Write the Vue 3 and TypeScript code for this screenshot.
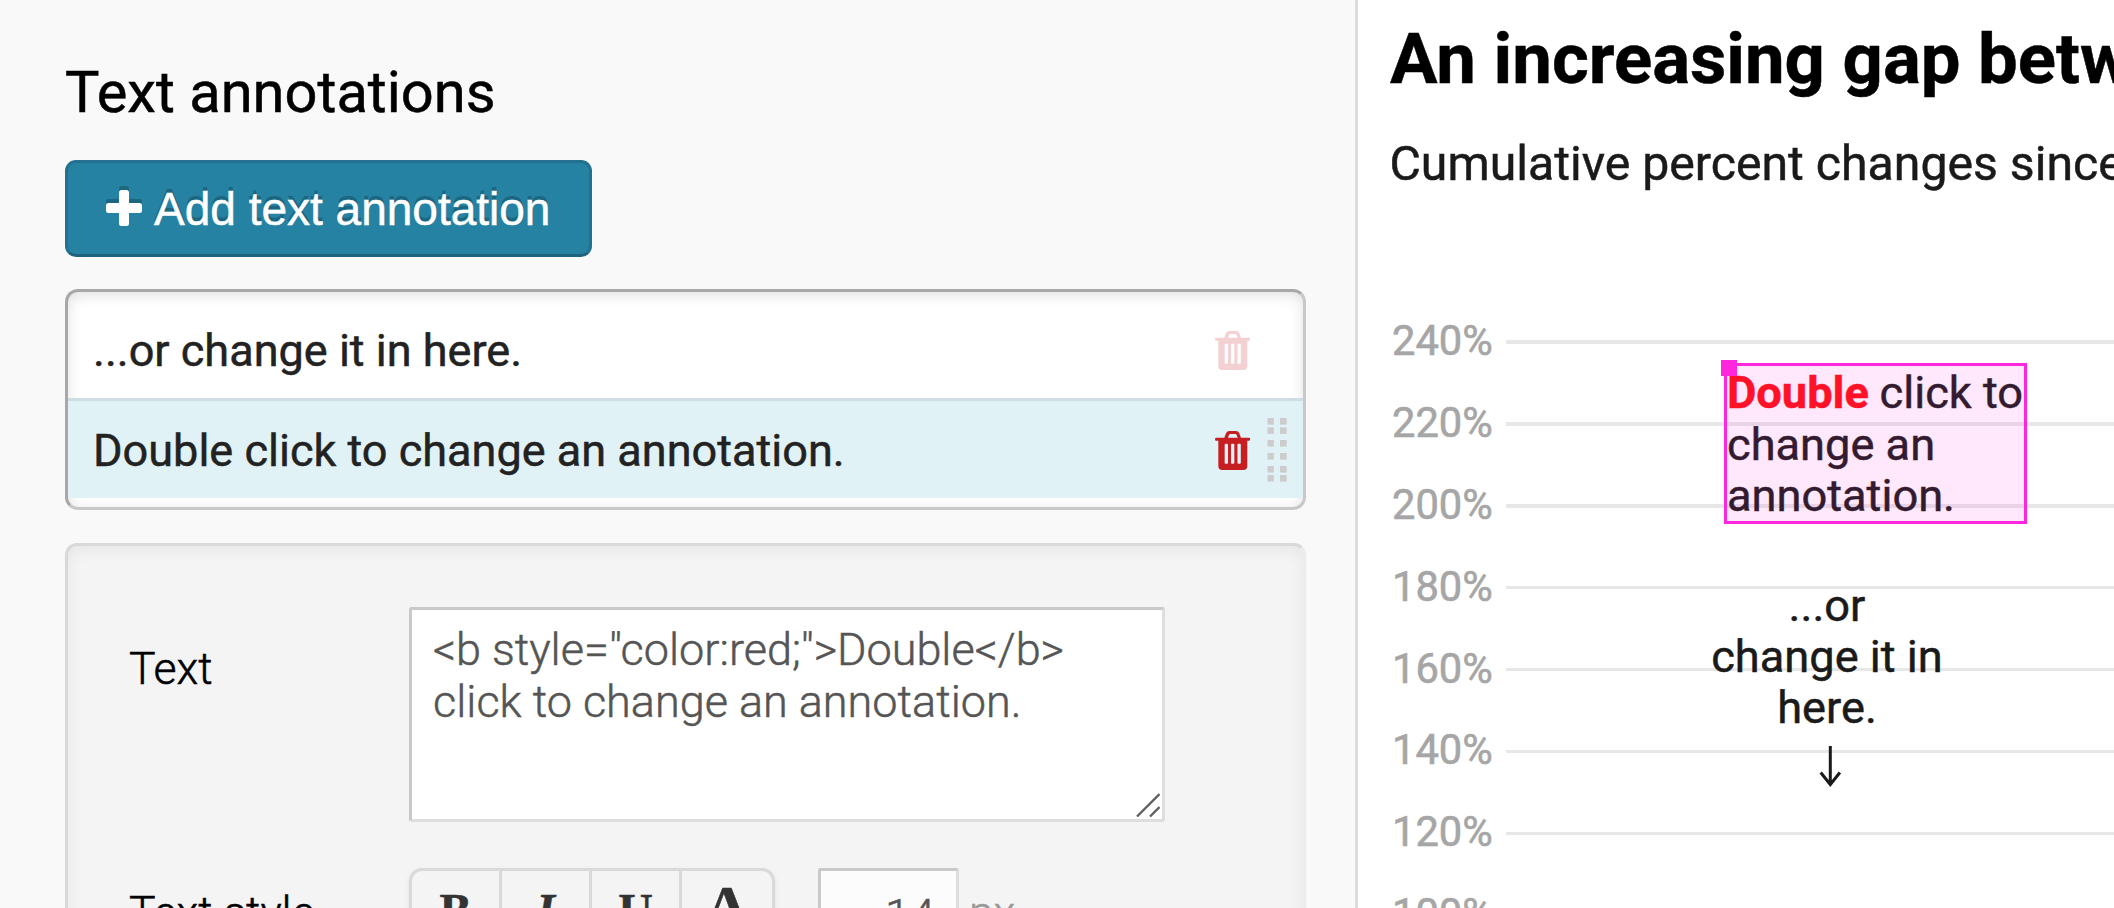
<script setup lang="ts">
import { ref } from 'vue'

interface Annotation {
  id: number
  label: string
}

const annotations: Annotation[] = [
  { id: 1, label: '...or change it in here.' },
  { id: 2, label: 'Double click to change an annotation.' },
]
const selected = ref(2)
const text = ref('<b style="color:red;">Double</b> click to change an annotation.')
const size = ref('14')

const ticks = [
  { label: '240%', y: 340, h: 4, base: 355 },
  { label: '220%', y: 422, h: 4, base: 437 },
  { label: '200%', y: 504, h: 4, base: 519 },
  { label: '180%', y: 586, h: 3, base: 601 },
  { label: '160%', y: 668, h: 3, base: 683 },
  { label: '140%', y: 750, h: 3, base: 764 },
  { label: '120%', y: 832, h: 3, base: 846 },
  { label: '100%', y: 914, h: 3, base: 928 },
]
const plus =
  'M15.5 0h5a2.5 2.5 0 0 1 2.5 2.5V13h10.5a2.5 2.5 0 0 1 2.5 2.5v5a2.5 2.5 0 0 1-2.5 2.5H23v10.5a2.5 2.5 0 0 1-2.5 2.5h-5a2.5 2.5 0 0 1-2.5-2.5V23H2.5A2.5 2.5 0 0 1 0 20.5v-5A2.5 2.5 0 0 1 2.5 13H13V2.5A2.5 2.5 0 0 1 15.5 0z'
</script>

<template>
  <div class="app">
    <section class="editor">
      <h2 class="heading">Text annotations</h2>
      <button class="add" type="button">
        <svg class="plus" viewBox="0 0 36 40" width="36" height="40">
          <path class="plus-shade" :d="plus" />
          <path class="plus-front" transform="translate(0 4)" :d="plus" />
        </svg>
        <span>Add text annotation</span>
      </button>

      <ul class="list">
        <li
          v-for="a in annotations"
          :key="a.id"
          class="row"
          :class="{ active: a.id === selected }"
          @click="selected = a.id"
        >
          <span class="row-label">{{ a.label }}</span>
          <svg class="trash" viewBox="344 181 106 117" width="35.3" height="39">
            <path
              fill-rule="evenodd"
              d="M372 201l5-13q3-7 10-7h20q7 0 10 7l5 13h24q4 0 4 4.500t-4 4.500h-5v76q0 12-12 12h-63q-12 0-12-12v-76h-6q-4 0-4-4.500t4-4.500zM383 201h29l-3-8q-1-3-4-3h-15q-3 0-4 3zM373 222v54q0 3 3 3h4q3 0 3-3v-54q0-3-3-3h-4q-3 0-3 3zM392 222v54q0 3 3 3h4q3 0 3-3v-54q0-3-3-3h-4q-3 0-3 3zM411.500 222v54q0 3 3 3h4q3 0 3-3v-54q0-3-3-3h-4q-3 0-3 3z"
            />
          </svg>
          <svg class="grip" viewBox="0 0 20 64" width="20" height="64">
            <template v-for="y in [0, 9.3, 22, 35, 48, 57]" :key="y">
              <rect x="0.5" :y="y" width="6.3" height="6.6" />
              <rect x="13" :y="y" width="6.7" height="6.6" />
            </template>
          </svg>
        </li>
      </ul>

      <div class="panel">
        <div class="field">
          <label class="label text-label">Text</label>
          <div class="area-wrap">
            <textarea v-model="text" class="area" spellcheck="false"></textarea>
            <svg class="resize" viewBox="0 0 24 24" width="24" height="24">
              <path d="M1 23.500L23.500 1M14 23.500L23.500 14" />
            </svg>
          </div>
        </div>
        <div class="field style-field">
          <label class="label style-label">Text style</label>
          <div class="group">
            <button type="button" class="tool">B</button>
            <button type="button" class="tool italic">I</button>
            <button type="button" class="tool">U</button>
            <button type="button" class="tool color">A</button>
          </div>
          <input v-model="size" class="size" type="text" />
          <span class="unit">px</span>
        </div>
      </div>
    </section>

    <section class="preview">
      <h1 class="title">An increasing gap between</h1>
      <p class="subtitle">Cumulative percent changes since</p>
      <svg class="chart" viewBox="1358 200 756 708" width="756" height="708">
        <g v-for="t in ticks" :key="t.label">
          <text class="tick" x="1392" :y="t.base">{{ t.label }}</text>
          <rect class="grid" x="1506" :y="t.y" width="620" :height="t.h" />
        </g>

        <text class="note" y="408"><tspan class="strong" x="1727">Double</tspan><tspan x="1879.5">click to</tspan></text>
        <text class="note" x="1727" y="460">change an</text>
        <text class="note" x="1727" y="511">annotation.</text>
        <rect class="box-fill" x="1724" y="363" width="303" height="161" />
        <rect class="box-line" x="1725.5" y="364.5" width="300" height="158" />
        <rect class="handle" x="1721" y="360" width="16" height="16" />

        <text class="note mid" x="1827" y="621">...or</text>
        <text class="note mid" x="1827" y="672">change it in</text>
        <text class="note mid" x="1827" y="723">here.</text>
        <path class="arrow" d="M1830.300 746v38M1820.700 772.500l9.600 12 9.600-12" />
      </svg>
    </section>
  </div>
</template>

<style scoped>
.app {
  display: flex;
  width: 2114px;
  height: 908px;
  overflow: hidden;
  background: #fff;
  font-family: Roboto, sans-serif;
  color: #000;
  -webkit-text-stroke: 0.5px currentColor;
}
.editor {
  box-sizing: border-box;
  flex: none;
  width: 1358px;
  height: 908px;
  padding: 57px 0 0 65px;
  overflow: hidden;
  background: #f9f9f9;
  border-right: 3px solid #dcdcdc;
}
.heading {
  margin: 0 0 33px;
  font-size: 57.8px;
  line-height: 70px;
  font-weight: 400;
}
.add {
  display: flex;
  align-items: center;
  box-sizing: border-box;
  width: 527px;
  height: 97px;
  margin: 0;
  padding: 0 0 0 38px;
  gap: 12px;
  border: 3px solid #23718e;
  border-bottom-color: #1d637d;
  border-radius: 11px;
  background: #2682a2;
  color: #fff;
  font-family: "Liberation Sans", sans-serif;
  font-size: 46px;
  line-height: 60px;
  white-space: nowrap;
  text-shadow: 0 -4px 0 #1c6680;
  -webkit-text-stroke: 0.5px #fff;
}
.plus {
  flex: none;
  margin-top: -5px;
}
.plus-shade {
  fill: #1c6680;
}
.plus-front {
  fill: #fff;
}
.list {
  box-sizing: border-box;
  width: 1241px;
  height: 221px;
  margin: 32px 0 33px;
  padding: 6px 0 9px;
  list-style: none;
  border: 3px solid;
  border-color: #a8a8a8 #c8c8c8 #c8c8c8 #a8a8a8;
  border-radius: 13px;
  background: #fff;
  box-shadow: inset 0 3px 14px rgba(0, 0, 0, 0.12);
}
.row {
  display: flex;
  align-items: center;
  box-sizing: border-box;
  height: 100px;
  padding: 2px 16px 0 25px;
  border-top: 3px solid transparent;
}
.row.active {
  background: #e1f2f7;
  border-top-color: #cddde3;
}
.row-label {
  flex: 1;
  font-size: 45.05px;
  line-height: 60px;
  color: #222;
  white-space: nowrap;
}
.trash {
  flex: none;
  margin-right: 17px;
  margin-top: -1px;
  fill: #c71e22;
  opacity: 0.2;
}
.active .trash {
  opacity: 1;
}
.grip {
  flex: none;
  margin-top: -2px;
  fill: #ccc;
  visibility: hidden;
}
.active .grip {
  visibility: visible;
}
.panel {
  box-sizing: border-box;
  width: 1241px;
  height: 500px;
  padding: 61px 0 0 61px;
  border: 3px solid #d9d9d9;
  border-right-color: #ececec;
  border-radius: 12px;
  background: #f4f4f4;
  box-shadow: inset 0 4px 16px rgba(0, 0, 0, 0.06);
}
.field {
  display: flex;
  align-items: flex-start;
}
.style-field {
  margin-top: 46px;
}
.label {
  flex: none;
  width: 280px;
  font-size: 44.6px;
  line-height: 60px;
  font-weight: 300;
}
.text-label {
  margin-top: 32px;
}
.style-label {
  margin-top: 15px;
}
.area-wrap {
  position: relative;
  width: 756px;
  height: 215px;
}
.area {
  display: block;
  box-sizing: border-box;
  width: 756px;
  height: 215px;
  margin: 0;
  padding: 14px 21px;
  overflow: hidden;
  resize: none;
  border: 3px solid;
  border-color: #c9c9c9 #dedede #dedede #c9c9c9;
  border-radius: 3px;
  background: #fff;
  font: 300 45px/52px Roboto, sans-serif;
  color: #555;
  outline: none;
  -webkit-text-stroke: 0.5px #555;
}
.resize {
  position: absolute;
  right: 5px;
  bottom: 5px;
  fill: none;
  stroke: #606060;
  stroke-width: 2.3;
}
.group {
  display: flex;
  box-sizing: border-box;
  flex: none;
  width: 366px;
  height: 90px;
  border: 3px solid #d9d9d9;
  border-radius: 13px;
  box-shadow: 0 3px 6px rgba(0, 0, 0, 0.07);
}
.tool {
  box-sizing: border-box;
  width: 90px;
  height: 84px;
  margin: 0;
  padding: 0 0 6px;
  border: 0;
  border-right: 3px solid #d9d9d9;
  background: none;
  font: 700 48px/75px "Liberation Serif", serif;
  color: #333;
  text-align: center;
}
.tool.italic {
  font-style: italic;
}
.tool.color {
  padding-bottom: 13px;
  border-right: 0;
  font-size: 62px;
  line-height: 70px;
}
.size {
  box-sizing: border-box;
  width: 141px;
  height: 90px;
  margin: 0 0 0 43px;
  padding: 4px 21px 0 0;
  border: 3px solid;
  border-color: #c9c9c9 #dedede #dedede #c9c9c9;
  border-radius: 3px;
  background: #fcfcfc;
  font: 300 45px/60px Roboto, sans-serif;
  color: #555;
  text-align: right;
  outline: none;
  -webkit-text-stroke: 0.5px #555;
}
.unit {
  margin: 15px 0 0 10px;
  font-size: 44.8px;
  line-height: 60px;
  font-weight: 300;
  color: #999;
}
.preview {
  box-sizing: border-box;
  width: 756px;
  height: 908px;
  overflow: hidden;
}
.title {
  height: 80px;
  margin: 19px 0 0 32px;
  font-size: 70.7px;
  line-height: 80px;
  font-weight: 700;
  white-space: nowrap;
}
.subtitle {
  height: 60px;
  margin: 34.5px 0 6.5px 31.5px;
  font-size: 48.2px;
  line-height: 60px;
  color: #1a1a1a;
  white-space: nowrap;
}
.chart {
  display: block;
}
.tick {
  font-size: 41.7px;
  fill: #a6a6a6;
  stroke: #a6a6a6;
  stroke-width: 0.6px;
  -webkit-text-stroke: 0;
}
.grid {
  fill: #e7e7e7;
}
.note {
  font-size: 45.2px;
  fill: #1a1a1a;
  stroke: #1a1a1a;
  stroke-width: 0.5px;
  -webkit-text-stroke: 0;
}
.strong {
  font-weight: 700;
  fill: #ff0f12;
  stroke: #ff0f12;
}
.mid {
  text-anchor: middle;
}
.box-fill {
  fill: #ff26dd;
  opacity: 0.105;
}
.box-line {
  fill: none;
  stroke: #ff26dd;
  stroke-width: 3;
}
.handle {
  fill: #ff26dd;
}
.arrow {
  fill: none;
  stroke: #1a1a1a;
  stroke-width: 3;
}
</style>

<style>
html,
body {
  margin: 0;
  background: #fff;
  overflow: hidden;
}
</style>
